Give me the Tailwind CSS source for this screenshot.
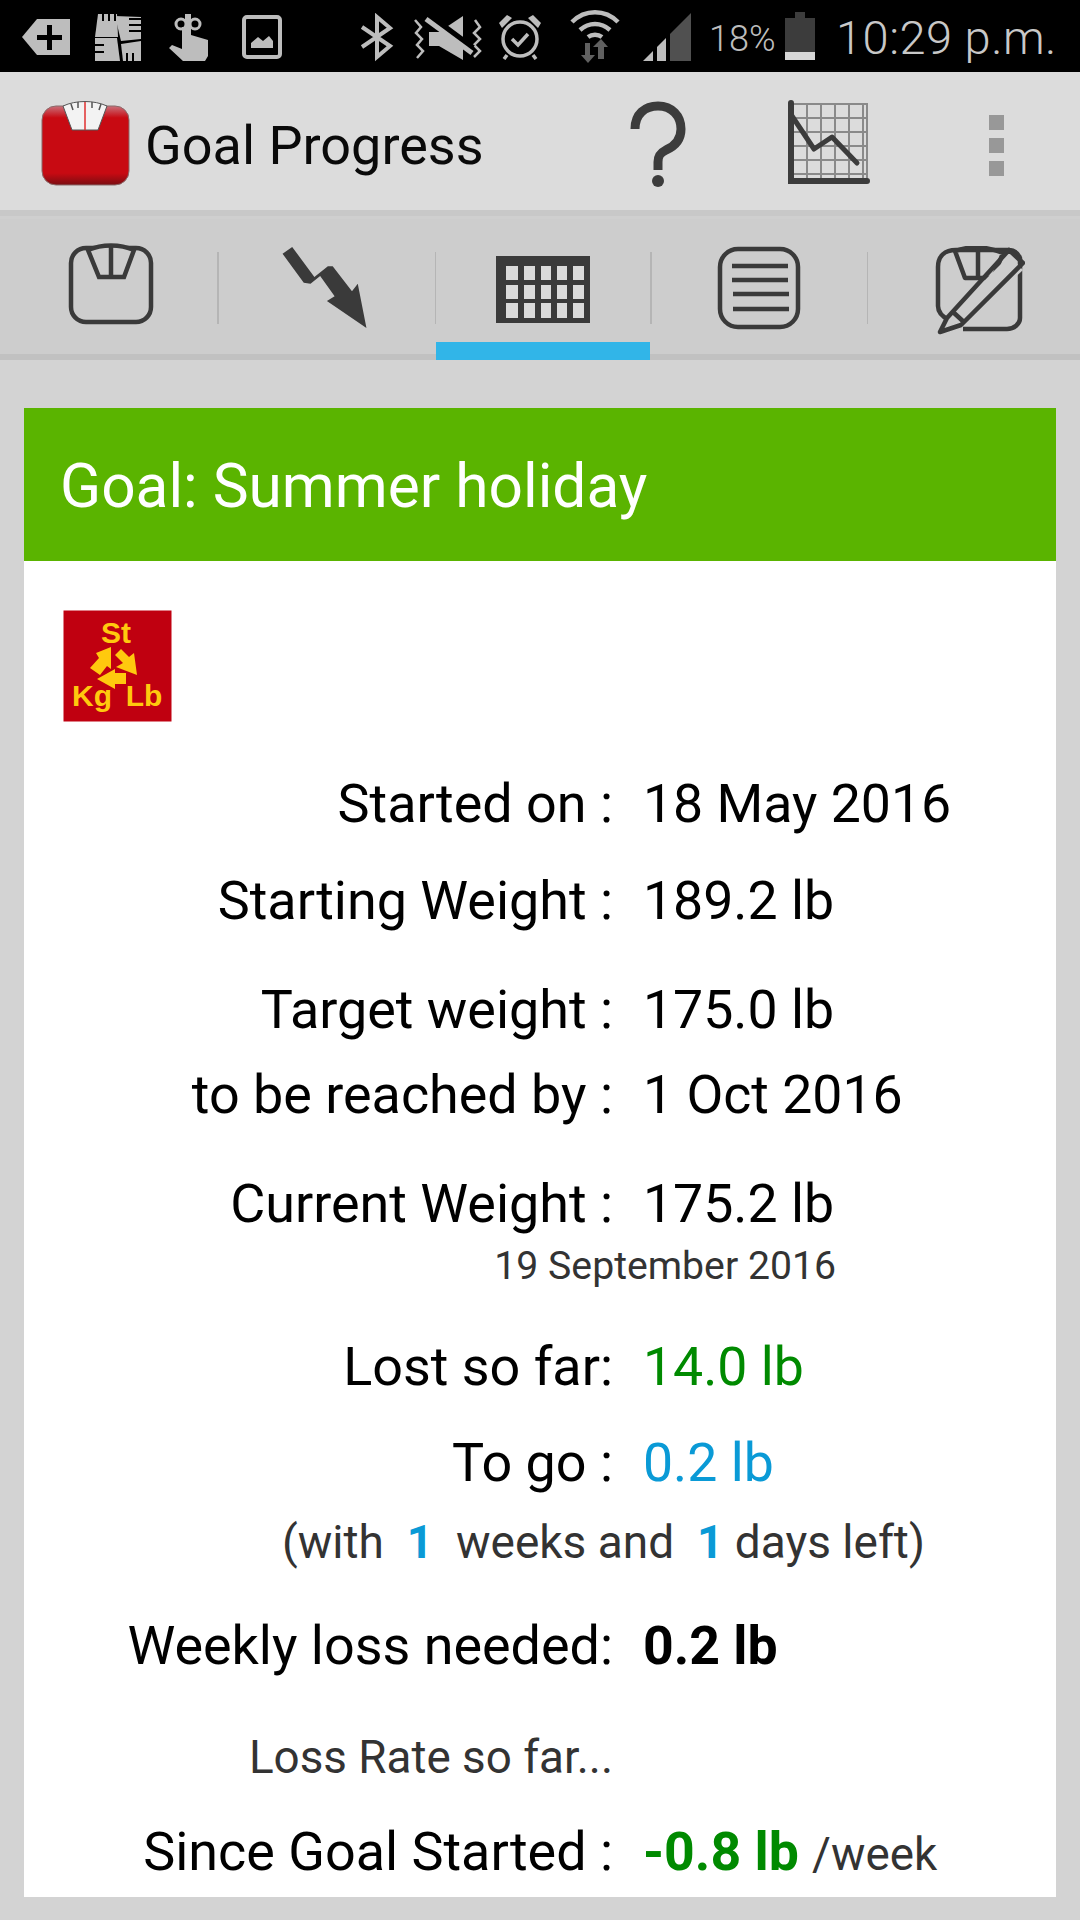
<!DOCTYPE html>
<html lang="en">
  <head>
    <meta charset="UTF-8" />
    <script src="https://cdn.jsdelivr.net/npm/@tailwindcss/browser@4"></script>
    <title>Goal Progress</title>
  </head>
  <body>
    <div class="w-[1080px] h-[1920px] overflow-hidden bg-[#d3d3d3] font-['Roboto',sans-serif] text-black">
      <!-- status bar -->
      <div class="h-[72px] bg-black flex items-center relative text-[#bdbdbd]">
        <svg class="absolute left-[22px] top-[18px]" width="48" height="38" viewBox="0 0 48 38"><path fill="#bdbdbd" d="M0 19 15 1h33v36H15z"/><path fill="#000" d="M15 17h10V7h5v10h10v5H30v10h-5V22H15z"/></svg>
        <svg class="absolute left-[95px] top-[13px]" width="47" height="49" viewBox="0 0 47 49" fill="#bdbdbd"><path d="M3 1h19l1 23H0z"/><path d="M20 3l26 1v22l-20 2z"/><path d="M0 25h22l3 23H0z"/><path d="M26 31l20-3v20H28z"/><path stroke="#000" stroke-width="2" d="M8 0v8M14 0v8M20 0v8M34 6h12M34 12h12M34 18h12M0 32h9M0 39h9M32 40v9M38 40v9"/></svg>
        <svg class="absolute left-[169px] top-[13px]" width="40" height="48" viewBox="0 0 40 48" fill="#bdbdbd"><circle cx="12" cy="11" r="5" fill="none" stroke="#bdbdbd" stroke-width="3"/><circle cx="26" cy="11" r="5" fill="none" stroke="#bdbdbd" stroke-width="3"/><path d="M16 1h6v21l17 5v16l-3 5H14L0 35l3-3 10 4V14h3z"/></svg>
        <svg class="absolute left-[242px] top-[15px]" width="40" height="44" viewBox="0 0 40 44"><rect x="2" y="2" width="36" height="40" rx="3" fill="none" stroke="#bdbdbd" stroke-width="4"/><path fill="#bdbdbd" d="M9 33V28l7-6 5 4 6-5 4 5v7z"/></svg>
        <svg class="absolute left-[360px] top-[13px]" width="34" height="49" viewBox="0 0 34 49" fill="none" stroke="#bdbdbd" stroke-width="4"><path d="M2 14 30 33 17 44V4l13 11L2 34"/></svg>
        <svg class="absolute left-[413px] top-[14px]" width="69" height="46" viewBox="0 0 69 46" fill="none" stroke="#bdbdbd" stroke-width="2.500"><path d="M2 6l6 7-5 6 6 6-5 6 6 6-6 7M62 6l5 7-6 6 6 6-6 6 6 6-6 6"/><path fill="#bdbdbd" stroke="none" d="M16 18h10L50 2v44L26 32H16z"/><path d="M13 1 59 35" stroke="#000" stroke-width="9"/><path d="M13 5 59 39" stroke="#bdbdbd" stroke-width="5"/></svg>
        <svg class="absolute left-[498px] top-[14px]" width="44" height="46" viewBox="0 0 44 46" fill="none" stroke="#bdbdbd" stroke-width="3.500"><circle cx="22" cy="25" r="17"/><path d="M14 25l6 6 10-11"/><path fill="#bdbdbd" stroke="none" d="M1 9 9 1l5 3L4 14zM43 9 35 1l-5 3 10 10z"/><path d="M9 41l-3 4M35 41l3 4"/></svg>
        <svg class="absolute left-[570px] top-[10px]" width="50" height="54" viewBox="0 0 50 54" fill="none" stroke="#bdbdbd" stroke-width="4.500"><path d="M2 12C15-1 35-1 48 12"/><path d="M10 20c9-8 21-8 30 0"/><path d="M18 27c4-3 10-3 14 0"/><path stroke="none" fill="#606060" d="M15 33h5v12h5l-7 8-7-8h4zM31 29l7 8h-4v12h-6V37h-5z"/></svg>
        <svg class="absolute left-[643px] top-[13px]" width="48" height="48" viewBox="0 0 48 48"><path fill="#505050" d="M48 0v48H27V21z"/><path fill="#bdbdbd" d="M23 25v23H14V34z"/><path fill="#bdbdbd" d="M10 38v10H0z"/></svg>
        <span class="absolute left-[709px] top-[19px] text-[36px] leading-[40px] font-light">18%</span>
        <div class="absolute left-[785px] top-[12px] w-[30px] h-[48px] flex flex-col items-center">
          <div class="w-[10px] h-[6px] bg-[#3c3c3c]"></div>
          <div class="w-[30px] h-[34px] bg-[#3c3c3c]"></div>
          <div class="w-[30px] h-[8px] bg-[#d6d6d6]"></div>
        </div>
        <span class="absolute left-[836px] top-[13px] text-[47px] leading-[50px] font-light tracking-[0.5px] text-[#c8c8c8] whitespace-nowrap">10:29 p.m.</span>
      </div>

      <!-- action bar -->
      <div class="h-[138px] bg-[#dcdcdc] flex items-center relative">
        <svg class="ml-[41px] mt-[4px]" width="90" height="86" viewBox="0 0 90 86">
          <defs>
            <linearGradient id="red" x1="0" y1="0" x2="0" y2="1">
              <stop offset="0" stop-color="#c9707a"/><stop offset="0.15" stop-color="#c80a12"/><stop offset="0.85" stop-color="#c80a12"/><stop offset="1" stop-color="#7a0d12"/>
            </linearGradient>
          </defs>
          <rect x="1" y="6" width="87" height="79" rx="14" fill="url(#red)" stroke="#8a6a6a" stroke-width="1"/>
          <path d="M22 6C35 0 53 0 66 6L57 30H31z" fill="#f3f3f3" stroke="#555" stroke-width="1"/>
          <path d="M44 2v28" stroke="#e03030" stroke-width="1.500"/>
          <path d="M30 4l2 6M37 2v6M51 2v6M60 4l-2 6" stroke="#555" stroke-width="1.500"/>
        </svg>
        <span class="ml-[14px] mt-[9px] text-[54px] leading-[60px] text-[#0a0a0a]">Goal Progress</span>
        <svg class="absolute left-[630px] top-[29px]" width="56" height="88" viewBox="0 0 56 88" fill="none" stroke="#3c3c3c" stroke-width="9"><path d="M5 28C5 13 15 5 28 5c14 0 23 10 23 23 0 12-8 18-15 21-6 3-8 6-8 12v8"/><circle cx="28" cy="80" r="6" fill="#3c3c3c" stroke="none"/></svg>
        <svg class="absolute left-[787px] top-[28px]" width="84" height="86" viewBox="0 0 84 86" fill="none">
          <path stroke="#8a8a8a" stroke-width="2" d="M6 4h74v78M20 4v76M34 4v76M48 4v76M62 4v76M76 4v76M6 18h74M6 32h74M6 46h74M6 60h74M6 74h74"/>
          <path stroke="#3c3c3c" stroke-width="6" stroke-linecap="round" d="M4 3v78h76"/>
          <path stroke="#3c3c3c" stroke-width="5" stroke-linecap="round" stroke-linejoin="round" d="M5 16l22 33 18-12 25 26"/>
        </svg>
        <div class="absolute left-[989px] top-[43px] w-[15px] flex flex-col gap-[8px]">
          <div class="h-[15px] bg-[#989898]"></div>
          <div class="h-[15px] bg-[#989898]"></div>
          <div class="h-[15px] bg-[#989898]"></div>
        </div>
      </div>

      <!-- tabs -->
      <div class="h-[6px] bg-[#c8c8c8]"></div>
      <div class="h-[3px] bg-[#cfcfcf]"></div>
      <div class="h-[141px] bg-[#cdcdcd] relative flex border-b-[6px] border-[#c1c1c1]">
        <div class="w-[217px] relative">
          <svg class="absolute left-[68px] top-[23px]" width="88" height="84" viewBox="0 0 88 84" fill="none" stroke="#3a3a3a" stroke-width="4.500"><rect x="3" y="6" width="80" height="74" rx="15"/><path d="M20 8C34 2 52 2 66 8L56 35H31z" fill="#cdcdcd"/><path d="M43 3v32"/></svg>
        </div>
        <div class="w-[1.5px] h-[72px] mt-[33px] bg-[#b5b5b5]"></div>
        <div class="w-[216px] relative">
          <svg class="absolute left-[63px] top-[28px]" width="85" height="81" viewBox="0 0 87 84"><path fill="#3a3a3a" d="M0 7 10 0 33 31 47 20 52 20 72 46 78 38 87 84 46 56 54 51 39 30 29 38 22 37z"/></svg>
        </div>
        <div class="w-[1.5px] h-[72px] mt-[33px] bg-[#b5b5b5]"></div>
        <div class="w-[214px] relative">
          <svg class="absolute left-[60px] top-[37px]" width="94" height="68" viewBox="0 0 94 68"><rect width="94" height="67" fill="#3a3a3a"/><g fill="#dadada"><rect x="10" y="10" width="12" height="14"/><rect x="28" y="10" width="11" height="14"/><rect x="45" y="10" width="10" height="14"/><rect x="61" y="10" width="10" height="14"/><rect x="77" y="10" width="11" height="14"/><rect x="10" y="29" width="12" height="14"/><rect x="28" y="29" width="11" height="14"/><rect x="45" y="29" width="10" height="14"/><rect x="61" y="29" width="10" height="14"/><rect x="77" y="29" width="11" height="14"/><rect x="10" y="47" width="12" height="15"/><rect x="28" y="47" width="11" height="15"/><rect x="45" y="47" width="10" height="15"/><rect x="61" y="47" width="10" height="15"/><rect x="77" y="47" width="11" height="15"/></g></svg>
          <div class="absolute left-0 right-0 -bottom-[6px] h-[18px] bg-[#31b5e8]"></div>
        </div>
        <div class="w-[1.5px] h-[72px] mt-[33px] bg-[#b5b5b5]"></div>
        <div class="w-[215px] relative">
          <svg class="absolute left-[65px] top-[27px]" width="84" height="84" viewBox="0 0 84 84" fill="none" stroke="#3a3a3a"><rect x="3" y="3" width="78" height="78" rx="18" stroke-width="4.500"/><path stroke-width="4.500" d="M15 20h56M15 34h56M16 48h56M16 63h56"/></svg>
        </div>
        <div class="w-[1.5px] h-[72px] mt-[33px] bg-[#b5b5b5]"></div>
        <div class="flex-1 relative">
          <svg class="absolute left-[67px] top-[27px]" width="90" height="90" viewBox="0 0 90 90" fill="none" stroke="#3a3a3a" stroke-width="4.500" stroke-linejoin="round"><path d="M14 74C6 70 3 66 3 60V21C3 10 10 4 21 4h52c6 0 10 3 12 8v60c0 6-6 11-13 11H28"/><path d="M20 5c14-5 32-5 48 2L58 32H30z"/><path d="M43 2v30"/><path fill="#cdcdcd" stroke="none" d="M10 74 74 10l14 14-64 60-18 6z"/><path d="M12 72 74 4 88 17 26 79 5 86zM18 66l12 11"/></svg>
        </div>
      </div>

      <!-- goal card -->
      <div class="mx-[24px] mt-[48px] bg-white h-[1489px]">
        <div class="h-[153px] bg-[#5ab400] flex items-center pl-[36px] pt-[5px] text-[60.4px] text-white">Goal: Summer holiday</div>
        <div class="pt-[49px]">
          <svg class="ml-[39px]" width="110" height="112" viewBox="0 0 110 112">
            <rect x="0.500" y="0.500" width="108" height="111" fill="#c00010"/>
            <text x="53" y="33" text-anchor="middle" font-family="Liberation Sans" font-weight="700" font-size="30" fill="#ffc90e">St</text>
            <text x="29" y="96" text-anchor="middle" font-family="Liberation Sans" font-weight="700" font-size="30" fill="#ffc90e">Kg</text>
            <text x="81" y="96" text-anchor="middle" font-family="Liberation Sans" font-weight="700" font-size="30" fill="#ffc90e">Lb</text>
            <g fill="#ffc90e">
              <path d="M48 37 33 43l3 5-9 10 10 7 7-9 4 3z"/>
              <path d="M52 45l6-6 8 8 5-4 3 22-21-8 7-4z"/>
              <path d="M34 69l18-10v4h11v11H52v5z"/>
            </g>
          </svg>
          <div class="grid grid-cols-[589px_1fr] gap-x-[30px] text-[53.9px] leading-[56px] mt-[54px]">
            <div class="text-right">Started on :</div><div class="text-[53.6px]">18 May 2016</div>
            <div class="text-right mt-[41px]">Starting Weight :</div><div class="text-[53.6px] mt-[41px]">189.2 lb</div>
            <div class="text-right mt-[53px]">Target weight :</div><div class="text-[53.6px] mt-[53px]">175.0 lb</div>
            <div class="text-right mt-[29px]">to be reached by :</div><div class="text-[53.6px] mt-[29px]">1 Oct 2016</div>
            <div class="text-right mt-[53px]">Current Weight :</div><div class="text-[53.6px] mt-[53px]">175.2 lb</div>
          </div>
          <div class="text-right pr-[220px] text-[39.2px] leading-[44px] mt-[12px] text-[#333333]">19 September 2016</div>
          <div class="grid grid-cols-[589px_1fr] gap-x-[30px] text-[53.9px] leading-[56px] mt-[51px]">
            <div class="text-right">Lost so far:</div><div class="text-[53.6px] text-[#008a00]">14.0 lb</div>
            <div class="text-right mt-[40px]">To go :</div><div class="text-[53.6px] text-[#0a9ad6] mt-[40px]">0.2 lb</div>
          </div>
          <div class="text-[46px] leading-[50px] mt-[26px] pl-[258px] text-[#333333] whitespace-pre">(with  <b class="text-[#0a9ad6]">1</b>  weeks and  <b class="text-[#0a9ad6]">1</b> days left)</div>
          <div class="grid grid-cols-[589px_1fr] gap-x-[30px] text-[53.9px] leading-[56px] mt-[51px]">
            <div class="text-right">Weekly loss needed:</div><div class="text-[53.6px] font-bold">0.2 lb</div>
          </div>
          <div class="grid grid-cols-[589px_1fr] gap-x-[30px] text-[45.8px] leading-[50px] mt-[59px]">
            <div class="text-right text-[#333333]">Loss Rate so far...</div><div></div>
          </div>
          <div class="grid grid-cols-[589px_1fr] gap-x-[30px] text-[53.9px] leading-[56px] mt-[41px]">
            <div class="text-right">Since Goal Started :</div><div class="text-[53.6px] whitespace-nowrap"><b class="text-[#008a00]">-0.8 lb</b> <span class="text-[45.8px] text-[#333333]">/week</span></div>
          </div>
        </div>
      </div>
    </div>
  </body>
</html>
